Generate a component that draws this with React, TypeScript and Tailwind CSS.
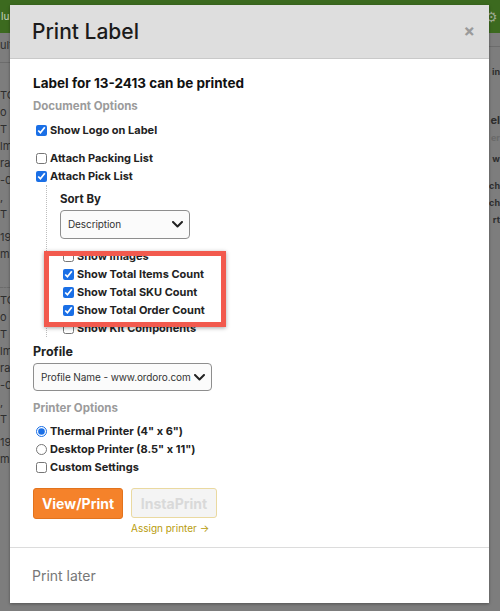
import React from "react";

const body = { fontFamily: "Inter, 'Liberation Sans', sans-serif" };

function Check({ label, checked = false, radio = false }: { label: string; checked?: boolean; radio?: boolean }) {
  return (
    <label className="flex h-[18px] items-center gap-[3px] text-[11px] font-bold text-[#222]">
      <input
        type={radio ? "radio" : "checkbox"}
        defaultChecked={checked}
        name={radio ? "printer" : undefined}
        className="m-0 ml-[3px] h-[11px] w-[11px] accent-[#1a6fe6]"
      />
      <span>{label}</span>
    </label>
  );
}

function Chevron() {
  return (
    <svg width="11" height="7" viewBox="0 0 11 7" className="shrink-0">
      <path d="M1 1l4.5 4.5L10 1" fill="none" stroke="#222" strokeWidth="2" strokeLinecap="round" strokeLinejoin="round" />
    </svg>
  );
}

function FakeSelect({ value, width, height }: { value: string; width: string; height: string }) {
  return (
    <div className={`flex items-center justify-between rounded-[4px] border border-[#8e8e8e] bg-[#fbfbfb] pl-[7px] pr-[6px] text-[10px] tracking-[-0.1px] text-[#333] ${width} ${height}`}>
      <span className="whitespace-nowrap">{value}</span>
      <Chevron />
    </div>
  );
}

export default function App() {
  return (
    <div className="relative h-[611px] w-[500px] overflow-hidden bg-[#7d7d7d]" style={body}>
      {/* dimmed page behind the modal */}
      <div className="absolute inset-x-0 top-0 flex h-[33px] items-center justify-between bg-[#3c6a1f] pl-[1px] pr-[2px] text-[10px] text-[#c8d4bf]">
        <span>lu</span>
        <span className="text-[14px] text-[#9aa890]">⚙</span>
      </div>
      <div className="absolute left-0 top-[33px] flex w-[10px] flex-col text-[11px] leading-[17px] text-[#2e2e2e]">
        <div className="h-[30px] border-b border-[#6c6c6c] pt-[4px]">ult</div>
        <div className="mt-[24px]">TO</div>
        <div>o T</div>
        <div>lm</div>
        <div>raz</div>
        <div>-0</div>
        <div>, T</div>
        <div className="mt-[6px]">19</div>
        <div>mi</div>
        <div className="mt-[24px] border-t border-dashed border-[#6c6c6c] pt-[4px]">TO</div>
        <div>o T</div>
        <div>lm</div>
        <div>raz</div>
        <div>-0</div>
        <div>, T</div>
        <div className="mt-[6px]">19</div>
        <div>mi</div>
      </div>
      <div className="absolute right-0 top-[33px] flex w-[11px] flex-col items-end text-[9px] font-bold leading-[17px] text-[#2e2e2e]">
        <div className="h-[14px] w-full border-b border-[#6c6c6c]" />
        <div className="mt-[16px]">in</div>
        <div className="mt-[32px] text-[11px]">el</div>
        <div className="text-[#6a6a6a]">er</div>
        <div className="mt-[4px]">w</div>
        <div className="mt-[10px]">ch</div>
        <div>ch</div>
        <div>rt</div>
      </div>

      {/* modal */}
      <div className="relative ml-[10px] mt-[5px] flex h-[598px] w-[479px] flex-col bg-white shadow-[0_1px_3px_rgba(0,0,0,0.35)]">
        <div className="flex h-[54px] shrink-0 items-center justify-between border-b border-[#c9c9c9] bg-[#dedede] pl-[22px] pr-[14px]">
          <h1 className="text-[21px] font-medium text-[#1b1b1b]">Print Label</h1>
          <span className="text-[17px] font-bold leading-none text-[#9a9a9a]">×</span>
        </div>

        <div className="flex flex-1 flex-col pl-[23px] pt-[15px]">
          <div className="h-[18px] text-[13.5px] font-bold leading-[18px] text-[#111]">Label for 13-2413 can be printed</div>
          <div className="mt-[6px] h-[16px] text-[11.5px] font-bold leading-[16px] text-[#9b9b9b]">Document Options</div>
          <div className="mt-[7px]">
            <Check label="Show Logo on Label" checked />
          </div>
          <div className="mt-[10px]">
            <Check label="Attach Packing List" />
            <Check label="Attach Pick List" checked />
          </div>

          <div className="ml-[13px] flex flex-col border-l border-dotted border-[#bdbdbd] pl-[13px] pt-[6px]">
            <div className="h-[16px] text-[11.5px] font-bold leading-[16px] text-[#222]">Sort By</div>
            <div className="mt-[3px]">
              <FakeSelect value="Description" width="w-[130px]" height="h-[29px]" />
            </div>
            <div className="relative mt-[8px]">
              <Check label="Show Images" />
              <Check label="Show Total Items Count" checked />
              <Check label="Show Total SKU Count" checked />
              <Check label="Show Total Order Count" checked />
              <Check label="Show Kit Components" />
              {/* annotation highlight */}
              <div className="absolute left-[-16px] top-[4px] h-[76px] w-[182px] border-[5px] border-[#f25a4e] shadow-[0_1px_4px_rgba(0,0,0,0.35)]" />
            </div>
          </div>

          <div className="mt-[7px] h-[16px] text-[12.5px] font-bold leading-[16px] text-[#222]">Profile</div>
          <div className="mt-[3px]">
            <FakeSelect value="Profile Name - www.ordoro.com" width="w-[179px]" height="h-[28px]" />
          </div>
          <div className="mt-[9px] h-[16px] text-[11.5px] font-bold leading-[16px] text-[#9b9b9b]">Printer Options</div>
          <div className="mt-[6px]">
            <Check label={'Thermal Printer (4" x 6")'} radio checked />
            <Check label={'Desktop Printer (8.5" x 11")'} radio />
            <Check label="Custom Settings" />
          </div>

          <div className="mt-[12px] flex gap-[8px]">
            <button className="h-[31px] w-[90px] rounded-[3px] border border-[#e2731d] bg-[#f5822a] text-[14px] font-bold text-white">
              View/Print
            </button>
            <div className="flex flex-col">
              <button className="h-[30px] w-[86px] rounded-[3px] border border-[#ead9a0] bg-[#f4f4f4] text-[14px] font-bold text-[#d9d9d9]">
                InstaPrint
              </button>
              <span className="mt-[4px] text-[10px] leading-[12px] text-[#b89c0c]">Assign printer →</span>
            </div>
          </div>
        </div>

        <div className="flex h-[56px] shrink-0 items-center border-t border-[#dcdcdc] pl-[22px] text-[14px] text-[#777]">
          Print later
        </div>
      </div>
    </div>
  );
}
